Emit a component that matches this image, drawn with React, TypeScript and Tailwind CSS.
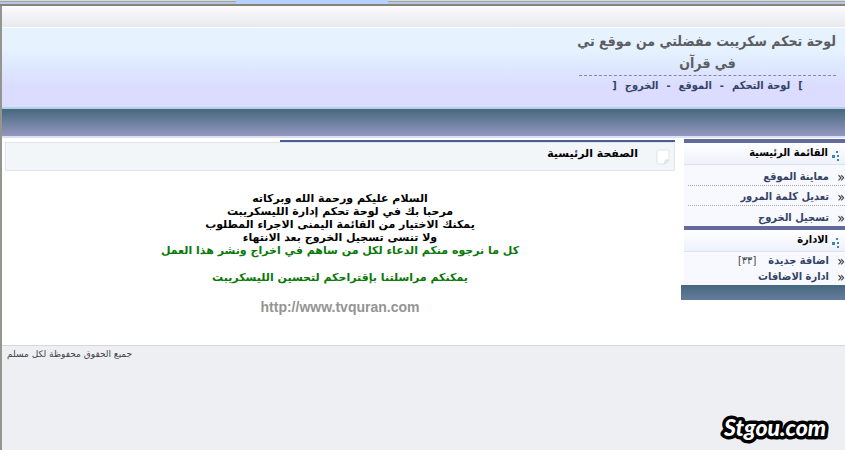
import React from "react";

const mainMenu = ["معاينة الموقع", "تعديل كلمة المرور", "تسجيل الخروج"];

const adminMenu = [
    { label: "اضافة جديدة", count: "[٣٣]" },
    { label: "ادارة الاضافات", count: "" },
];

const headerLinks = ["لوحة التحكم", "الموقع", "الخروج"];

const welcome = [
    "السلام عليكم ورحمة الله وبركاته",
    "مرحبا بك في لوحة تحكم إدارة الليسكريبت",
    "يمكنك الاختيار من القائمة اليمنى الاجراء المطلوب",
    "ولا تنسى تسجيل الخروج بعد الانتهاء",
];

function BrowserEdge() {
    return (
        <div dir="ltr" className="flex h-[6px] border-b-2 border-[#84847c] bg-[#c0c4e4]">
            <div className="h-[2px] w-[236px] border-b border-[#9aa8a4] bg-[#d0dcdc]" />
            <div className="h-[4px] w-[152px] bg-[#b8d0fc]" />
            <div className="h-[2px] flex-1 border-b border-[#9aa8a4] bg-[#d0dcdc]" />
        </div>
    );
}

function PageIcon() {
    return (
        <svg width="14" height="16" viewBox="0 0 14 16" aria-hidden="true">
            <path d="M2 1h10a1 1 0 0 1 1 1v9l-4 4H2a1 1 0 0 1-1-1V2a1 1 0 0 1 1-1z" fill="#fff" stroke="#dfe5ea" />
            <path d="M13 11h-3a1 1 0 0 0-1 1v3z" fill="#eef1f4" stroke="#d5dce3" />
        </svg>
    );
}

function MenuTitle({ text }: { text: string }) {
    return (
        <h2 className="flex h-[22px] items-center gap-1 border-b border-[#dfe2ee] bg-linear-to-b from-white to-[#eef1fb] pr-[5px] font-bold text-black">
            <svg width="8" height="10" viewBox="0 0 8 10" className="mt-1 shrink-0" aria-hidden="true">
                <path d="M4 0h2v2H4zM0 4h3v3H0zM5 4h2v2H5zM5 8h2v2H5z" fill="#3c84bc" />
            </svg>
            {text}
        </h2>
    );
}

function MenuItem({ label, count }: { label: string; count?: string }) {
    return (
        <>
            <span dir="ltr" className="w-[16px] shrink-0 text-right text-[14px] text-[#222]">»</span>
            <a href="#" className="font-bold text-[#334466]">{label}</a>
            {count && <span className="mr-3 text-[#444]">{count}</span>}
        </>
    );
}

export default function App() {
    return (
        <div dir="rtl" lang="ar" className="flex min-h-screen flex-col bg-[#eeeff3] font-['DejaVu_Sans',sans-serif] text-[11px]">
            <BrowserEdge />
            <div className="flex flex-1 flex-col border-l-2 border-[#95958f]">
                <div className="h-[22px] border-b border-white bg-linear-to-b from-[#fdfbfd] to-[#e6e9ee]" />

                <header className="h-[81px] border-b-2 border-[#b4d0e4] bg-linear-to-b from-[#e6f3ff] from-25% via-[#dde8ff] via-50% to-[#dbdcff] to-75% pr-[9px] pt-[2px]">
                    <div className="w-[257px] text-center font-['DejaVu_Sans_Condensed','DejaVu_Sans',sans-serif] font-bold">
                        <h1 className="whitespace-nowrap border-b border-dashed border-[#8888a0] pb-px text-[14px] leading-[22px] text-[#5c5c62]">
                            لوحة تحكم سكريبت مفضلتي من موقع تي
                            <br />
                            في قرآن
                        </h1>
                        <nav className="flex items-center justify-center gap-2 text-[11px] leading-[20px] text-[#334466]">
                            <span dir="ltr">[</span>
                            {headerLinks.map((link, i) => (
                                <React.Fragment key={link}>
                                    {i > 0 && <span>-</span>}
                                    <a href="#">{link}</a>
                                </React.Fragment>
                            ))}
                            <span dir="ltr">]</span>
                        </nav>
                    </div>
                </header>

                <div className="h-[29px] border-b-2 border-[#dce0f4] bg-linear-to-b from-[#46687e] to-[#9498c0]" />

                <div className="flex items-start bg-white pb-[29px]">
                    <aside className="w-[164px] shrink-0 pt-px font-['DejaVu_Sans_Condensed','DejaVu_Sans',sans-serif]">
                        <div className="ml-[3px] bg-[#f8f9fe]">
                            <section className="border-t-4 border-[#646a9c]">
                                <MenuTitle text="القائمة الرئيسية" />
                                <ul className="pt-px">
                                    {mainMenu.map((label) => (
                                        <li key={label} className="ml-1 flex h-[20px] items-end border-b border-dotted border-[#a4a8b4] leading-[16px] last:border-0">
                                            <MenuItem label={label} />
                                        </li>
                                    ))}
                                </ul>
                            </section>
                            <section className="border-t-4 border-[#646a9c]">
                                <MenuTitle text="الادارة" />
                                <ul className="pt-px">
                                    {adminMenu.map((item) => (
                                        <li key={item.label} className="flex h-[16px] items-end leading-[16px]">
                                            <MenuItem label={item.label} count={item.count} />
                                        </li>
                                    ))}
                                </ul>
                            </section>
                        </div>
                        <div className="h-[15px] bg-linear-to-b from-[#46687e] to-[#647c9c]" />
                    </aside>

                    <main className="min-w-0 flex-1 pt-[2px] pr-[6px] pl-[3px]">
                        <div className="h-[2px] w-[59%] bg-[#4c5c94]" />
                        <div className="flex h-[29px] items-center gap-[18px] border border-[#dfe5ee] bg-[#f2f6f9] pr-[4px]">
                            <PageIcon />
                            <h2 className="pb-1 font-bold text-black">الصفحة الرئيسية</h2>
                        </div>
                        <div className="pt-[21px] text-center font-bold leading-[13px]">
                            {welcome.map((line) => (
                                <p key={line}>{line}</p>
                            ))}
                            <p className="text-[#087808]">كل ما نرجوه منكم الدعاء لكل من ساهم في اخراج ونشر هذا العمل</p>
                            <p className="mt-[14px] text-[#087808]">يمكنكم مراسلتنا بإقتراحكم لتحسين الليسكريبت</p>
                            <a href="#" dir="ltr" className="mt-[14px] inline-block font-['Liberation_Sans',sans-serif] text-[14px] leading-[18px] text-[#949494]">
                                http://www.tvquran.com
                            </a>
                        </div>
                    </main>
                </div>

                <footer className="relative flex-1 border-t border-[#d4d8de] pt-px pl-[5px] text-left text-[9px] leading-[14px] text-[#444]">
                    جميع الحقوق محفوظة لكل مسلم
                    <svg width="116" height="36" viewBox="0 0 116 36" className="absolute right-[10px] bottom-[2px]" role="img" aria-label="Stgou.com">
                        <text x="5" y="24" direction="ltr" fontFamily="Lato, sans-serif" fontSize="23" fontWeight="900" fontStyle="italic" fill="#fff" stroke="#000" strokeWidth="7" strokeLinejoin="round" paintOrder="stroke">
                            Stgou.com
                        </text>
                    </svg>
                </footer>
            </div>
        </div>
    );
}
